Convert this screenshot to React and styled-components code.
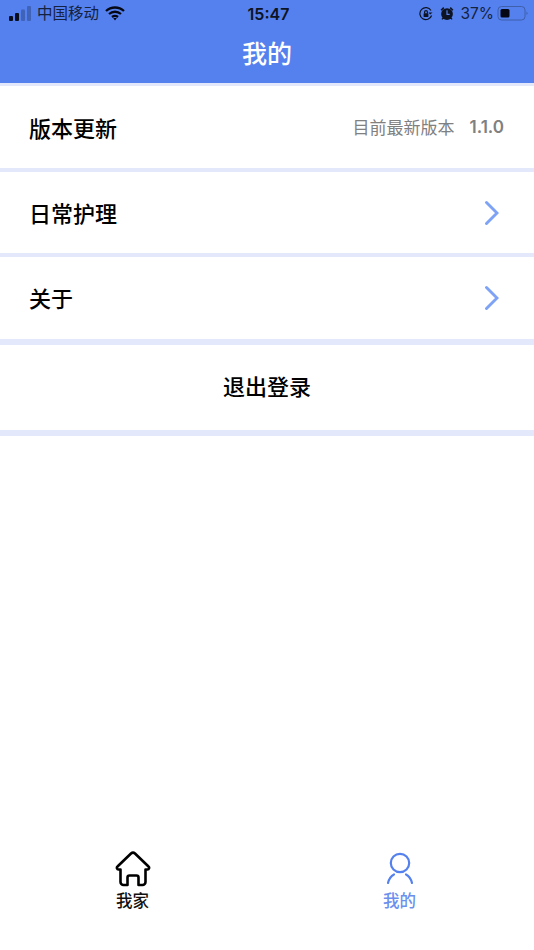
import React from "react";
import styled, { createGlobalStyle } from "styled-components";

const Global = createGlobalStyle`
  html, body { margin: 0; padding: 0; background: #fff; }
  body { font-family: "Liberation Sans", "Noto Sans CJK SC", sans-serif; }
`;
const CJK = `Inter, "Noto Sans CJK SC", sans-serif`;

const Page = styled.div`
  width: 534px; height: 950px; display: flex; flex-direction: column; overflow: hidden; background: #fff;
`;
const Header = styled.header`
  height: 83px; background: #5581ee; display: flex; flex-direction: column; flex: none;
`;
const StatusBar = styled.div`
  height: 27px; display: grid; grid-template-columns: 1fr auto 1fr; align-items: center; padding: 0 6px 0 9px; color: #111a33;
  font-family: ${CJK};
`;
const StatusLeft = styled.div`display: flex; align-items: center; gap: 6px;`;
const StatusRight = styled.div`display: flex; align-items: center; justify-content: flex-end;`;
const Carrier = styled.span`font-size: 15.5px; line-height: 27px; color: #14213f;`;
const Clock = styled.span`font-size: 16px; font-weight: 600; color: #0d1322;`;
const Battery = styled.span`font-size: 15.5px; color: #14213f; margin: 0 3px 0 6px;`;
const Title = styled.h1`
  margin: 0; height: 56px; text-align: center; color: #fff; font: 500 25px/55px ${CJK};
`;
const Band = styled.div`height: ${p => p.$h}px; background: #e3e8fb; flex: none;`;
const Row = styled.div`
  height: ${p => p.$h}px; flex: none; display: flex; align-items: center; justify-content: space-between;
  padding: 0 35px ${p => p.$pb ?? 2}px 29px; box-sizing: border-box; font-family: ${CJK};
`;
const RowLabel = styled.span`font-size: 22px; font-weight: 500; color: #000;`;
const RowValue = styled.span`display: flex; align-items: center; gap: 15px; margin-right: -5px; font-size: 17px; line-height: 24px; color: #808080;`;
const ValueText = styled.span`position: relative; top: 1px;`;
const Version = styled.b`font-weight: 600; font-size: 17px;`;
const Logout = styled.div`
  height: 85px; flex: none; display: flex; align-items: center; justify-content: center; padding-bottom: 6px; box-sizing: border-box;
  font: 500 22px ${CJK}; color: #000;
`;
const Spacer = styled.div`flex: 1;`;
const TabBar = styled.nav`
  height: 100px; flex: none; display: grid; grid-template-columns: 1fr 1fr;
`;
const Tab = styled.div`
  display: flex; flex-direction: column; align-items: center; gap: 3px; font: 500 16.5px/20px ${CJK};
  color: ${p => p.$active ? "#6c8fee" : "#111"};
  transform: translateX(-1px);
`;
const ChevronIcon = styled.svg`margin-top: 2px;`;
const Chevron = () => (
  <ChevronIcon width="16" height="26" viewBox="0 0 16 26" fill="none">
    <path d="M3.500 2.500 L14 13 L3.500 23.500" stroke="#7ea2f5" strokeWidth="2.900" strokeLinecap="round" strokeLinejoin="miter" />
  </ChevronIcon>
);

export default function App() {
  return (
    <Page>
      <Global />
      <Header>
        <StatusBar>
          <StatusLeft>
            <svg width="22" height="15" viewBox="0 0 22 15">
              <rect x="0" y="10" width="4" height="5" rx="1" fill="#0a0f1e" />
              <rect x="6" y="7" width="4" height="8" rx="1" fill="#0a0f1e" />
              <rect x="12" y="3.500" width="4" height="11.500" rx="1" fill="#3f63b8" />
              <rect x="18" y="0" width="4" height="15" rx="1" fill="#3f63b8" />
            </svg>
            <Carrier>中国移动</Carrier>
            <svg width="20" height="15" viewBox="0 0 20 15" fill="none" stroke="#050814" strokeWidth="2.300">
              <path d="M1 5 C6 0.300 14 0.300 19 5" />
              <path d="M4 8 C7.500 5 12.500 5 16 8" />
              <path d="M7 11 C8.800 9.600 11.200 9.600 13 11" />
              <path d="M8.200 12 L10 14.500 L11.800 12 Z" fill="#050814" stroke="none" />
            </svg>
          </StatusLeft>
          <Clock>15:47</Clock>
          <StatusRight>
            <svg width="14" height="14" viewBox="0 0 14 14" fill="none" stroke="#0d1322" strokeWidth="1.200" style={{ marginRight: 7 }}>
              <path d="M12.600 8.500 A6 6 0 1 1 12 3.500" />
              <path d="M13.500 5.500 L11.200 7.500 L9.500 5.500 Z" fill="#0d1322" stroke="none" />
              <rect x="4.600" y="6.200" width="4.800" height="3.800" rx="0.500" fill="#0d1322" stroke="none" />
              <path d="M5.600 6.500 V5 a1.400 1.400 0 0 1 2.800 0 V6.500" />
            </svg>
            <svg width="14" height="15" viewBox="0 0 13 14">
              <circle cx="6.500" cy="7.500" r="5.500" fill="#0d1322" />
              <path d="M0.500 3.500 L3 1 L4 2 L1.500 4.500 Z M12.500 3.500 L10 1 L9 2 L11.500 4.500 Z" fill="#0d1322" />
              <path d="M1.800 12.500 L3 11 M11.200 12.500 L10 11" stroke="#0d1322" strokeWidth="1.200" />
              <path d="M6.500 4 V7.800 H9" stroke="#5581ee" strokeWidth="1.100" fill="none" />
            </svg>
            <Battery>37%</Battery>
            <svg width="31" height="15" viewBox="0 0 30 15" fill="none">
              <rect x="0.500" y="0.500" width="27" height="13.500" rx="3.500" stroke="#3f5faa" />
              <rect x="3" y="3" width="9" height="8.500" rx="1.500" fill="#050814" />
              <path d="M29 5.500 a2 2 0 0 1 0 3.500 Z" fill="#3f5faa" />
            </svg>
          </StatusRight>
        </StatusBar>
        <Title>我的</Title>
      </Header>
      <Band $h={3} />
      <Row $h={82} $pb={0}>
        <RowLabel>版本更新</RowLabel>
        <RowValue><ValueText>目前最新版本</ValueText><Version>1.1.0</Version></RowValue>
      </Row>
      <Band $h={4} />
      <Row $h={81}><RowLabel>日常护理</RowLabel><Chevron /></Row>
      <Band $h={4} />
      <Row $h={82}><RowLabel>关于</RowLabel><Chevron /></Row>
      <Band $h={6} />
      <Logout>退出登录</Logout>
      <Band $h={6} />
      <Spacer />
      <TabBar>
        <Tab>
          <svg width="38" height="38" viewBox="0 0 38 38" fill="none">
            <path d="M17 3.500 a3 3 0 0 1 4 0 L34.500 16.500 a1.700 1.700 0 0 1 -1 3 H31.500 V32 a3 3 0 0 1 -3 3 H24.500 V27.500 a2 2 0 0 0 -2 -2 H15.500 a2 2 0 0 0 -2 2 V35 H9.500 a3 3 0 0 1 -3 -3 V19.500 H4.500 a1.700 1.700 0 0 1 -1 -3 Z" stroke="#000" strokeWidth="2.600" strokeLinejoin="round" />
          </svg>
          <span>我家</span>
        </Tab>
        <Tab $active>
          <svg width="38" height="38" viewBox="0 0 38 38" fill="none" stroke="#5581ee" strokeWidth="2.200" strokeLinecap="round">
            <circle cx="19" cy="13" r="9.200" />
            <path d="M7 33 C8 29 10 26 13 24.500 M31 33 C30 29 28 26 25 24.500" />
          </svg>
          <span>我的</span>
        </Tab>
      </TabBar>
    </Page>
  );
}
